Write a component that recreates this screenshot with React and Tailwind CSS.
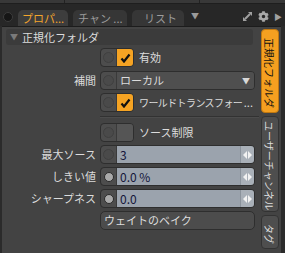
import { FaCog } from "react-icons/fa";

const font = { fontFamily: '"Noto Sans CJK JP", "Noto Sans", sans-serif' };

function Knob({ filled }) {
  return (
    <div className="w-[16px] shrink-0 h-full flex items-center justify-center border-r border-[#3a3a3a] bg-[#4d4d4d] rounded-l-[4px]">
      {filled ? (
        <div className="w-[10px] h-[10px] rounded-full bg-[#a9a9a9] border border-[#2a2a2a]" />
      ) : (
        <div className="w-[11px] h-[11px] rounded-full bg-[#4a4a4a] border border-[#404040]" />
      )}
    </div>
  );
}

function Check({ on }) {
  return (
    <div className="flex shrink-0 h-full w-[34px] rounded-[4px] border border-[#2e2e2e] overflow-hidden">
      <Knob />
      <div className={`flex-1 flex items-center justify-center ${on ? "bg-[#f5a323]" : "bg-[#555555]"}`}>
        {on && (
          <svg width="11" height="10" viewBox="0 0 11 10">
            <path d="M1.5 5.5 L4 8.5 L9.5 1.5" fill="none" stroke="#111" strokeWidth="2.2" />
          </svg>
        )}
      </div>
    </div>
  );
}

function Row({ label, children, className = "" }) {
  return (
    <div className={`flex h-[19px] ${className}`}>
      <div className="w-[94px] text-right text-[11px] leading-[19px] text-[#dcdcdc] whitespace-nowrap">{label}</div>
      <div className="ml-[4px] w-[155px] h-full">{children}</div>
    </div>
  );
}

function NumField({ value, filled }) {
  return (
    <div className="flex h-full w-full rounded-[4px] border border-[#2e2e2e] overflow-hidden">
      <Knob filled={filled} />
      <div className="flex-1 bg-[#9ba3ad] text-[#14163a] text-[12px] leading-[17px] pl-[3px]">{value}</div>
      <div className="w-[14px] bg-[#a9b0b8] border-l border-[#8b939c] flex items-center justify-center">
        <svg width="9" height="8" viewBox="0 0 9 8">
          <path d="M0 4 L4 0 L4 8 Z" fill="#f2f2f2" />
          <path d="M9 4 L5 0 L5 8 Z" fill="#f2f2f2" />
        </svg>
      </div>
    </div>
  );
}

function SideTab({ label, active, h }) {
  return (
    <div
      className={`w-[18px] shrink-0 overflow-hidden whitespace-nowrap rounded-[4px] border flex items-start justify-center pt-[3px] text-[10px] leading-[18px] [writing-mode:vertical-rl] [text-orientation:sideways] ${
        active ? "bg-[#f5a020] border-[#c07810] text-[#111]" : "bg-[#4e4e4e] border-[#333] text-[#dedede]"
      }`}
      style={{ height: h }}
    >
      {label}
    </div>
  );
}

export default function App() {
  return (
    <div className="w-[285px] h-[253px] bg-[#2b2b2b] flex flex-col overflow-hidden" style={font}>
      {/* top strip */}
      <div className="h-[4px] bg-[#383838] border-b border-[#1e1e1e] flex">
        <div className="w-[65px] border-r border-[#222]" />
        <div className="w-[135px] border-r border-[#222]" />
      </div>

      {/* tab bar */}
      <div className="h-[22px] bg-[#272727] flex items-end">
        <div className="ml-[3px] mb-[4px] w-[10px] h-[10px] rounded-full bg-[#161616] border border-[#3c3c3c]" />
        <div className="ml-[5px] w-[50px] h-[16px] rounded-t-[5px] bg-[#3d3d3d] text-[#f4a52c] text-[11px] leading-[16px] pl-[4px]">プロパ...</div>
        <div className="ml-[5px] w-[54px] h-[16px] rounded-t-[5px] bg-[#363636] text-[#9c9c9c] text-[11px] leading-[16px] pl-[5px]">チャン ...</div>
        <div className="ml-[5px] w-[52px] h-[16px] rounded-t-[5px] bg-[#363636] text-[#9c9c9c] text-[11px] leading-[16px] pl-[12px]">リスト</div>
        <div className="ml-[7px] mb-[6px] text-[#9a9a9a] text-[8px] leading-none">▼</div>
        <div className="ml-auto mb-[4px] flex items-center gap-[5px] mr-[3px]">
          <svg width="11" height="11" viewBox="0 0 11 11">
            <path d="M6 1 H10 V5 Z" fill="#a0a0a0" />
            <path d="M1 6 V10 H5 Z" fill="#a0a0a0" />
            <path d="M3 8 L8 3" stroke="#a0a0a0" strokeWidth="2" />
          </svg>
          <FaCog size={11} color="#a8a8a8" />
          <span className="text-[#a0a0a0] text-[8px] leading-none">▶</span>
        </div>
      </div>

      {/* body */}
      <div className="flex-1 flex bg-[#434343] ml-[2px] mr-[4px] border-t border-[#1c1c1c]">
        <div className="w-[257px] shrink-0 pt-[2px] text-[#dcdcdc]">
          <div className="ml-[4px] mr-[6px] h-[16px] rounded-[3px] bg-[#3b3b3b] flex items-center">
            <span className="ml-[4px] text-[#7a7a7a] text-[8px] leading-none">▼</span>
            <span className="ml-[4px] text-[11px] leading-[16px]">正規化フォルダ</span>
          </div>

          <Row label="" className="mt-[3px]">
            <div className="flex items-center h-full">
              <Check on />
              <span className="ml-[5px] text-[11px]">有効</span>
            </div>
          </Row>

          <Row label="補間" className="mt-[4px]">
            <div className="flex h-full w-full rounded-[4px] border border-[#2e2e2e] overflow-hidden">
              <Knob />
              <div className="flex-1 bg-[#4f4f4f] flex items-center justify-between pl-[3px] pr-[4px] text-[11px]">
                <span>ローカル</span>
                <span className="text-[#d8d8d8] text-[8px] leading-none">▼</span>
              </div>
            </div>
          </Row>

          <Row label="" className="mt-[3px]">
            <div className="flex items-center h-full">
              <Check on />
              <span className="ml-[5px] text-[10px] tracking-[-0.6px] whitespace-nowrap">ワールドトランスフォー</span>
              <span className="ml-auto mr-[2px] shrink-0 text-[11px]">...</span>
            </div>
          </Row>

          <div className="ml-[98px] mt-[4px] h-[2px] border-t border-[#323232] border-b border-b-[#4c4c4c]" />

          <Row label="" className="mt-[5px]">
            <div className="flex items-center h-full">
              <Check />
              <span className="ml-[5px] text-[11px]">ソース制限</span>
            </div>
          </Row>

          <Row label="最大ソース" className="mt-[3px]">
            <NumField value="3" />
          </Row>
          <Row label="しきい値" className="mt-[3px]">
            <NumField value="0.0 %" filled />
          </Row>
          <Row label="シャープネス" className="mt-[3px]">
            <NumField value="0.0" filled />
          </Row>
          <Row label="" className="mt-[3px]">
            <div className="h-full w-full rounded-[5px] border border-[#2e2e2e] bg-[#4c4c4c] text-[11px] leading-[17px] pl-[3px]">
              ウェイトのベイク
            </div>
          </Row>
        </div>

        <div className="ml-[2px] pt-[2px] flex flex-col gap-[3px]">
          <SideTab label="正規化フォルダ" active h={84} />
          <SideTab label="ユーザーチャンネル" h={96} />
          <SideTab label="タグ" h={34} />
        </div>
      </div>
    </div>
  );
}
